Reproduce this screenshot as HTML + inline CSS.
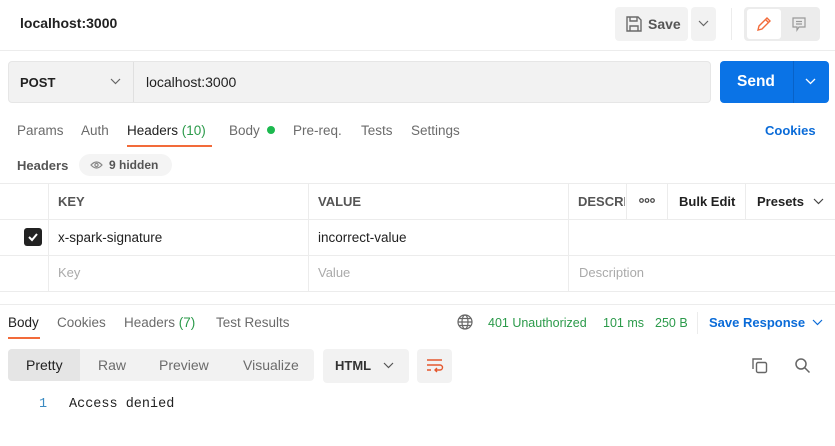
<!DOCTYPE html>
<html><head><style>
*{margin:0;padding:0;box-sizing:border-box}
body{width:835px;height:446px;background:#fff;font-family:"Liberation Sans",sans-serif;color:#212121;position:relative;overflow:hidden;font-size:13px}
.a{position:absolute;white-space:nowrap}
.g{color:#6b6b6b}
.t{font-size:13.5px}
.hl{position:absolute;height:1px;background:#ececec}
.vl{position:absolute;width:1px;background:#ececec}
</style></head><body>
<div class="a" style="left:20px;top:15px;font-size:14px;font-weight:bold">localhost:3000</div>
<div class="a" style="left:615px;top:7px;width:73px;height:34px;background:#f2f2f2;border-radius:4px"></div>
<svg class="a" style="left:625px;top:15px" width="18" height="18" viewBox="0 0 18 18" fill="none" stroke="#6b6b6b" stroke-width="1.4"><path d="M2 2h11l3 3v11H2z"/><path d="M5 2v4h7V2M5 16v-5h8v5"/></svg>
<div class="a" style="left:648px;top:16px;font-weight:bold;color:#555;font-size:14px">Save</div>
<div class="a" style="left:691px;top:7px;width:25px;height:34px;background:#f2f2f2;border-radius:4px"></div>
<svg class="a" style="left:698px;top:20px" width="11" height="8"><path d="M1 1l4.5 4.5L10 1" stroke="#666" fill="none" stroke-width="1.2"/></svg>
<div class="vl" style="left:731px;top:8px;height:32px"></div>
<div class="a" style="left:744px;top:7px;width:76px;height:34px;background:#ececec;border-radius:4px"></div>
<div class="a" style="left:747px;top:9px;width:34px;height:30px;background:#fff;border-radius:3px"></div>
<svg class="a" style="left:756px;top:16px" width="16" height="16" fill="none" stroke="#f26b3a" stroke-width="1.4"><path d="M2 14l1-4 8-8 3 3-8 8z M9.5 3.5l3 3"/></svg>
<svg class="a" style="left:791px;top:16px" width="16" height="16" fill="none" stroke="#999" stroke-width="1.2"><path d="M2 2h12v9H8l-2 3v-3H2z M5 5.5h6M5 8h6"/></svg>
<div class="hl" style="left:0;top:50px;width:835px"></div>

<div class="a" style="left:8px;top:61px;width:703px;height:42px;background:#f2f2f2;border:1px solid #e6e6e6;border-radius:4px"></div>
<div class="vl" style="left:133px;top:62px;height:40px;background:#e0e0e0"></div>
<div class="a" style="left:20px;top:75px;font-weight:bold;font-size:13px">POST</div>
<svg class="a" style="left:110px;top:78px" width="11" height="8"><path d="M1 1l4.5 4.5L10 1" stroke="#666" fill="none" stroke-width="1.2"/></svg>
<div class="a" style="left:146px;top:74px;font-size:14px">localhost:3000</div>
<div class="a" style="left:720px;top:61px;width:109px;height:42px;background:#0a73e6;border-radius:4px"></div>
<div class="vl" style="left:793px;top:61px;height:42px;background:#0862c8"></div>
<div class="a" style="left:737px;top:73px;color:#fff;font-weight:bold;font-size:15.5px">Send</div>
<svg class="a" style="left:805px;top:78px" width="11" height="8"><path d="M1 1l4.5 4.5L10 1" stroke="#fff" fill="none" stroke-width="1.3"/></svg>

<div class="a g t" style="left:17px;top:123px">Params</div>
<div class="a g t" style="left:81px;top:123px">Auth</div>
<div class="a t" style="left:127px;top:123px">Headers <span style="color:#2b9a4a">(10)</span></div>
<div class="a" style="left:127px;top:145px;width:85px;height:2px;background:#f26b3a"></div>
<div class="a g t" style="left:229px;top:123px">Body</div>
<div class="a" style="left:267px;top:126px;width:8px;height:8px;border-radius:50%;background:#1cb94f"></div>
<div class="a g t" style="left:293px;top:123px">Pre-req.</div>
<div class="a g t" style="left:361px;top:123px">Tests</div>
<div class="a g t" style="left:411px;top:123px">Settings</div>
<div class="a" style="left:765px;top:123px;color:#0a6bd8;font-weight:bold">Cookies</div>

<div class="a" style="left:17px;top:158px;font-weight:bold;color:#555">Headers</div>
<div class="a" style="left:79px;top:154px;width:93px;height:22px;background:#f4f4f4;border-radius:11px"></div>
<svg class="a" style="left:90px;top:160px" width="13" height="10" fill="none" stroke="#888" stroke-width="1.2"><path d="M1 5Q6.5-1 12 5Q6.5 11 1 5z"/><circle cx="6.5" cy="5" r="1.6"/></svg>
<div class="a" style="left:109px;top:158px;font-weight:bold;color:#555;font-size:12px">9 hidden</div>

<div class="hl" style="left:0;top:183px;width:835px"></div>
<div class="hl" style="left:0;top:219px;width:835px"></div>
<div class="hl" style="left:0;top:255px;width:835px"></div>
<div class="hl" style="left:0;top:291px;width:835px"></div>
<div class="vl" style="left:48px;top:183px;height:108px"></div>
<div class="vl" style="left:308px;top:183px;height:108px"></div>
<div class="vl" style="left:568px;top:183px;height:108px"></div>
<div class="vl" style="left:626px;top:183px;height:36px"></div>
<div class="vl" style="left:667px;top:183px;height:36px"></div>
<div class="vl" style="left:745px;top:183px;height:36px"></div>
<div class="a" style="left:58px;top:194px;font-weight:bold;color:#555">KEY</div>
<div class="a" style="left:318px;top:194px;font-weight:bold;color:#555">VALUE</div>
<div class="a" style="left:578px;top:194px;font-weight:bold;color:#555;width:47px;overflow:hidden">DESCRI</div>
<svg class="a" style="left:639px;top:197px" width="16" height="7" fill="none" stroke="#444" stroke-width="1.2"><circle cx="2.5" cy="3.5" r="1.8"/><circle cx="8" cy="3.5" r="1.8"/><circle cx="13.5" cy="3.5" r="1.8"/></svg>
<div class="a" style="left:679px;top:194px;font-weight:bold">Bulk Edit</div>
<div class="a" style="left:757px;top:194px;font-weight:bold">Presets</div>
<svg class="a" style="left:813px;top:198px" width="11" height="8"><path d="M1 1l4.5 4.5L10 1" stroke="#444" fill="none" stroke-width="1.2"/></svg>
<div class="a" style="left:24px;top:228px;width:18px;height:18px;background:#222;border-radius:3px"></div>
<svg class="a" style="left:27px;top:231px" width="12" height="12"><path d="M2 6l3 3 5-6" stroke="#fff" stroke-width="2" fill="none"/></svg>
<div class="a t" style="left:58px;top:230px">x-spark-signature</div>
<div class="a t" style="left:318px;top:230px">incorrect-value</div>
<div class="a" style="left:58px;top:265px;color:#aaa">Key</div>
<div class="a" style="left:318px;top:265px;color:#aaa">Value</div>
<div class="a" style="left:579px;top:265px;color:#aaa">Description</div>

<div class="hl" style="left:0;top:304px;width:835px"></div>
<div class="a t" style="left:8px;top:315px">Body</div>
<div class="a" style="left:8px;top:337px;width:32px;height:2px;background:#f26b3a"></div>
<div class="a g t" style="left:57px;top:315px">Cookies</div>
<div class="a g t" style="left:124px;top:315px">Headers <span style="color:#2b9a4a">(7)</span></div>
<div class="a g t" style="left:216px;top:315px">Test Results</div>
<svg class="a" style="left:457px;top:314px" width="16" height="16" fill="none" stroke="#666" stroke-width="1.2"><circle cx="8" cy="8" r="7"/><ellipse cx="8" cy="8" rx="3" ry="7"/><path d="M1 8h14M2.5 4.5h11M2.5 11.5h11"/></svg>
<div class="a" style="left:488px;top:316px;color:#2b9a4a;font-size:12.5px">401 Unauthorized</div>
<div class="a" style="left:603px;top:316px;color:#2b9a4a;font-size:12.5px">101 ms</div>
<div class="a" style="left:655px;top:316px;color:#2b9a4a;font-size:12.5px">250 B</div>
<div class="vl" style="left:697px;top:312px;height:22px"></div>
<div class="a" style="left:709px;top:315px;color:#0a6bd8;font-weight:bold">Save Response</div>
<svg class="a" style="left:812px;top:319px" width="11" height="8"><path d="M1 1l4.5 4.5L10 1" stroke="#0a6bd8" fill="none" stroke-width="1.2"/></svg>

<div class="a" style="left:8px;top:349px;width:306px;height:32px;background:#f2f2f2;border-radius:4px"></div>
<div class="a" style="left:8px;top:349px;width:72px;height:32px;background:#e5e5e5;border-radius:4px 0 0 4px"></div>
<div class="a" style="left:26px;top:357px;font-size:14px">Pretty</div>
<div class="a g" style="left:98px;top:357px;font-size:14px">Raw</div>
<div class="a g" style="left:159px;top:357px;font-size:14px">Preview</div>
<div class="a g" style="left:243px;top:357px;font-size:14px">Visualize</div>
<div class="a" style="left:323px;top:349px;width:86px;height:34px;background:#f2f2f2;border-radius:4px"></div>
<div class="a" style="left:335px;top:358px;font-weight:bold;color:#333">HTML</div>
<svg class="a" style="left:383px;top:362px" width="11" height="8"><path d="M1 1l4.5 4.5L10 1" stroke="#555" fill="none" stroke-width="1.2"/></svg>
<div class="a" style="left:417px;top:349px;width:35px;height:34px;background:#f2f2f2;border-radius:4px"></div>
<svg class="a" style="left:426px;top:358px" width="18" height="15" fill="none" stroke="#e4572e" stroke-width="1.4"><path d="M1 2h15M1 7h13a2.5 2.5 0 0 1 0 5H9M11 10l-2 2 2 2M1 12h4"/></svg>
<svg class="a" style="left:750px;top:356px" width="19" height="19" fill="none" stroke="#666" stroke-width="1.4"><path d="M3 13V3h9"/><rect x="6.5" y="6.5" width="10" height="10" rx="1.5"/></svg>
<svg class="a" style="left:794px;top:357px" width="17" height="17" fill="none" stroke="#666" stroke-width="1.5"><circle cx="7" cy="7" r="5"/><path d="M10.5 10.5l5 5"/></svg>

<div class="a" style="left:39px;top:397px;color:#3b8bc2;font-family:'Liberation Mono',monospace;font-size:13.5px">1</div>
<div class="a" style="left:69px;top:397px;font-family:'Liberation Mono',monospace;font-size:13.5px">Access denied</div>
</body></html>
